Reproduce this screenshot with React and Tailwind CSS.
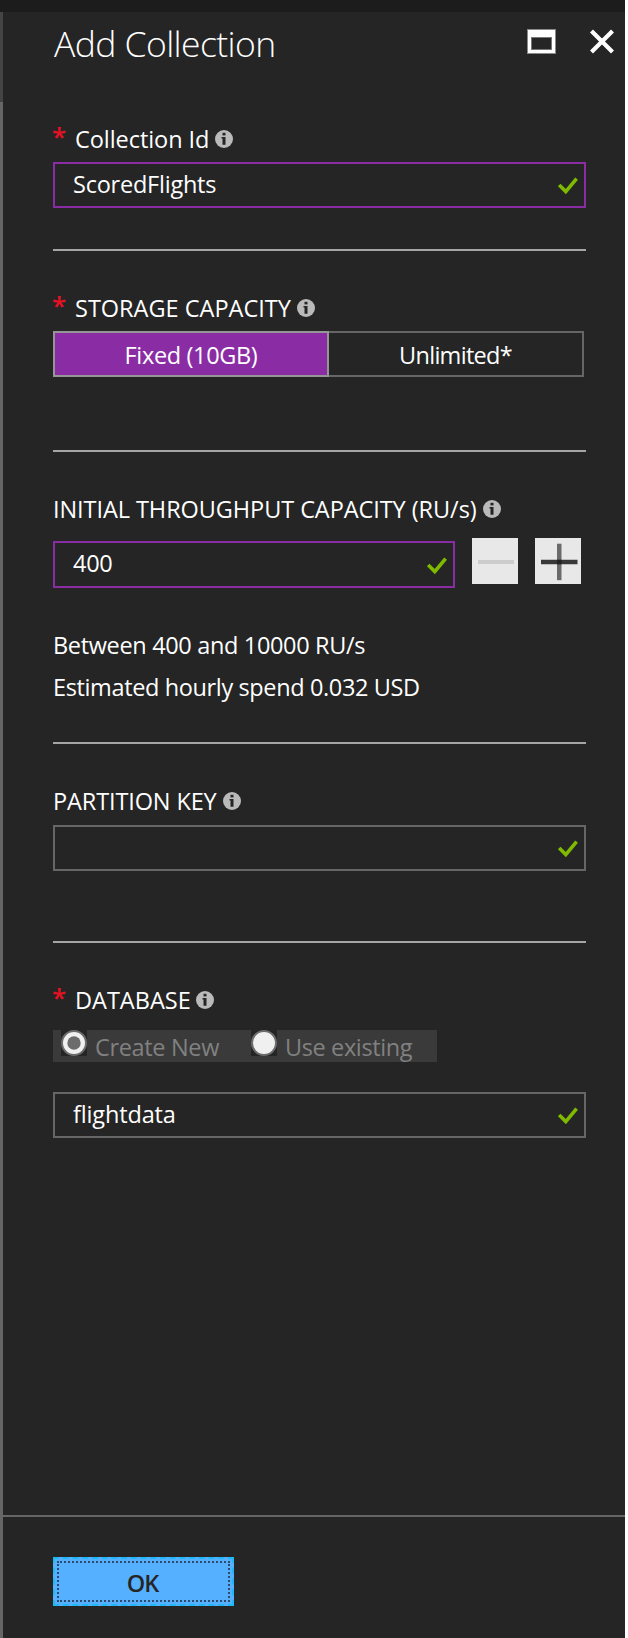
function InfoIcon() {
  return (
    <svg className="mt-[7px] h-[18px] w-[18px] shrink-0" viewBox="0 0 18 18">
      <circle cx="9" cy="9" r="9" fill="#bababa" />
      <path d="M7.5 2.8h3v2.6h-3z" fill="#252525" />
      <path d="M6.5 7h4v7.8h-3V8.6h-1z" fill="#252525" />
    </svg>
  );
}

function Check() {
  return (
    <svg className="mt-[2px] h-[18px] w-5 shrink-0" viewBox="0 0 20 18" fill="none">
      <path d="M1.2 7.9L7.8 14.6L18.6 1.6" stroke="#7fba00" strokeWidth="3.6" />
    </svg>
  );
}

function Label({ required, text, className }) {
  return (
    <div className="flex h-8 leading-8">
      {required && (
        <span className="-ml-px w-[23px] shrink-0 text-[26px] font-semibold leading-[26px] text-[#e81123]">*</span>
      )}
      <span className={`shrink-0 whitespace-nowrap ${className}`}>{text}</span>
      <InfoIcon />
    </div>
  );
}

function Field({ value, className, textClass = "pb-[2px]" }) {
  return (
    <div className={`flex items-center justify-between border-2 pl-[18px] pr-[6px] ${className}`}>
      <span className={`leading-8 ${textClass}`}>{value}</span>
      <Check />
    </div>
  );
}

function Divider({ className }) {
  return <div className={`h-[2px] w-[533px] bg-[#a5a5a5] ${className}`} />;
}

function Radio({ checked }) {
  return (
    <svg className="h-[26px] w-[26px] shrink-0 bg-[#252525]" viewBox="0 0 26 26">
      <circle cx="13" cy="13" r="12" fill="#f0f0f0" stroke="#6c6c6c" strokeWidth="2" />
      {checked && <circle cx="13" cy="13" r="6.7" fill="#6c6c6c" />}
    </svg>
  );
}

export default function App() {
  return (
    <div className="flex h-[1638px] w-[628px] flex-col overflow-hidden border-r-[3px] border-white bg-[#252525] font-['Open_Sans','Noto_Sans',sans-serif] text-[23.5px] text-white">
      <div className="h-3 shrink-0 bg-[#1c1c1c]" />
      <div className="flex min-h-0 flex-1">
        <div className="flex w-[3px] shrink-0 flex-col">
          <div className="h-[90px] bg-[#444444]" />
          <div className="flex-1 bg-[#666666]" />
        </div>

        <div className="flex flex-1 flex-col">
          <header className="flex h-[111px] pl-[51px] pr-[11px] pt-[11px]">
            <h1 className="flex-1 text-[35.5px] font-light leading-10 tracking-[-0.58px]">Add Collection</h1>
            <svg className="mt-[6px] h-[25px] w-[29px]" viewBox="0 0 29 25">
              <path d="M0 0h29v25H0z" fill="#8a8a8a" />
              <path d="M1 1h27v23H1z" fill="#fff" />
              <path d="M4 8h21v13H4z" fill="#777" />
              <path d="M5 9h19v11H5z" fill="#252525" />
            </svg>
            <svg className="ml-[34px] mt-[6px] h-[25px] w-6" viewBox="0 0 24 25">
              <path d="M1.5 2L22.5 23M22.5 2L1.5 23" stroke="#fff" strokeWidth="4.2" />
            </svg>
          </header>

          <main className="flex flex-1 flex-col pl-[50px]">
            <Label required text="Collection Id" className="w-[140px] tracking-[-0.06px]" />
            <Field value="ScoredFlights" className="mt-[7px] h-[46px] w-[533px] border-[#8a2da5]" textClass="pb-[2px] tracking-[-0.23px]" />
            <Divider className="mt-[41px]" />

            <div className="mt-[41px]">
              <Label required text="STORAGE CAPACITY" className="w-[222px]" />
            </div>
            <div className="mt-[7px] flex h-[46px] w-[531px] text-center leading-[44px]">
              <div className="w-[276px] border-2 border-[#959595] bg-[#8a2da5] tracking-[-0.35px]">Fixed (10GB)</div>
              <div className="flex-1 border-2 border-l-0 border-[#666666] tracking-[-0.7px]">Unlimited*</div>
            </div>
            <Divider className="mt-[73px]" />

            <div className="mt-[41px]">
              <Label text="INITIAL THROUGHPUT CAPACITY (RU/s)" className="w-[430px] tracking-[-0.07px]" />
            </div>
            <div className="mt-[13px] flex h-[50px]">
              <Field value="400" className="mt-[3px] h-[47px] w-[402px] border-[#8a2da5]" textClass="pb-1 tracking-[-0.3px]" />
              <svg className="ml-[17px] h-[46px] w-[46px]" viewBox="0 0 46 46">
                <path d="M0 0h46v46H0z" fill="#e8e8e8" />
                <path d="M6 22h36v4H6z" fill="#cccccc" />
              </svg>
              <svg className="ml-[17px] h-[46px] w-[46px]" viewBox="0 0 46 46">
                <path d="M0 0h46v46H0z" fill="#e8e8e8" />
                <path d="M22 5.7h4.5v36.5H22z" fill="#6a6a6a" />
                <path d="M6 21.8h36.5v4.4H6z" fill="#383838" />
                <path d="M22 21.8h4.5v4.4H22z" fill="#222222" />
              </svg>
            </div>
            <p className="mt-[41px] h-8 leading-8 tracking-[-0.34px]">Between 400 and 10000 RU/s</p>
            <p className="mt-[10px] h-8 leading-8 tracking-[-0.37px]">Estimated hourly spend 0.032 USD</p>
            <Divider className="mt-[39px]" />

            <div className="mt-[41px]">
              <Label text="PARTITION KEY" className="w-[170px] tracking-[-0.12px]" />
            </div>
            <Field value="" className="mt-[8px] h-[46px] w-[533px] border-[#666666]" />
            <Divider className="mt-[70px]" />

            <div className="mt-[41px]">
              <Label required text="DATABASE" className="w-[121px]" />
            </div>
            <div className="mt-[14px] flex h-8 w-[384px] bg-[#3a3a3a] pl-[8px] leading-[35px] text-[#818181]">
              <Radio checked />
              <span className="ml-[8px] w-[156px] tracking-[-0.34px]">Create New</span>
              <Radio />
              <span className="ml-[8px] tracking-[-0.38px]">Use existing</span>
            </div>
            <Field value="flightdata" className="mt-[30px] h-[46px] w-[533px] border-[#666666]" textClass="pb-[2px] tracking-[-0.15px]" />
          </main>

          <footer className="h-[123px] border-t-2 border-[#666666] pl-[50px] pt-10">
            <button className="block h-[49px] w-[181px] border-2 border-dashed border-[#1cb9f6] bg-[#55b0ff] p-[2px] text-[#252525]">
              <span className="block h-[41px] border-2 border-dotted border-[#2c4c6a] pr-[2px] pt-[1px] text-center font-semibold leading-[38px] tracking-[-1px]">OK</span>
            </button>
          </footer>
        </div>
      </div>
    </div>
  );
}
